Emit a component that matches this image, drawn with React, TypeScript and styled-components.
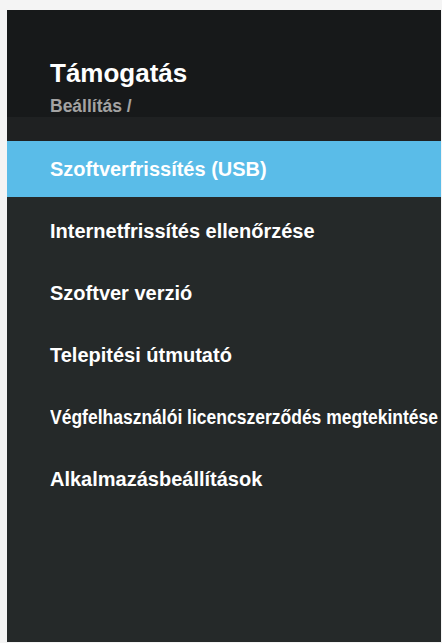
import React from "react";
import styled, { createGlobalStyle } from "styled-components";

const GlobalStyle = createGlobalStyle`
    html, body {
        margin: 0;
        padding: 0;
        background: #ffffff;
    }

    body {
        font-family: "Liberation Sans", Arial, sans-serif;
    }
`;

const Page = styled.div`
    width: 442px;
    height: 643px;
    padding: 10px 1px 1px 7px;
    box-sizing: border-box;
    background: #f4f4f4;
`;

const Panel = styled.div`
    height: 100%;
    display: flex;
    flex-direction: column;
    background: #252929;
    overflow: hidden;
`;

const Header = styled.div`
    display: flex;
    flex-direction: column;
    padding: 48px 0 0 43px;
    height: 107px;
    box-sizing: border-box;
    background: #17191a;
`;

const Title = styled.h1`
    margin: 0;
    font-size: 26px;
    line-height: 30px;
    font-weight: 700;
    color: #ffffff;
`;

const Breadcrumb = styled.div`
    margin-top: 8px;
    font-size: 17.5px;
    line-height: 20px;
    font-weight: 700;
    color: #a3a3a3;
`;

const Band = styled.div`
    height: 24px;
    background: #1f2122;
`;

const Menu = styled.ul`
    list-style: none;
    margin: 0;
    padding: 0;
    display: flex;
    flex-direction: column;
    gap: 6px;
`;

const Item = styled.li<{ $active?: boolean }>`
    height: 56px;
    display: flex;
    align-items: center;
    padding-left: 43px;
    background: ${(p) => (p.$active ? "#5abce8" : "transparent")};
    color: #ffffff;
    font-size: 20px;
    font-weight: 700;
    white-space: nowrap;
`;

const Label = styled.span<{ $squeeze?: number }>`
    display: inline-block;
    transform-origin: left center;
    transform: scaleX(${(p) => p.$squeeze ?? 1});
`;

const items: { label: string; squeeze?: number }[] = [
    { label: "Szoftverfrissítés (USB)" },
    { label: "Internetfrissítés ellenőrzése" },
    { label: "Szoftver verzió" },
    { label: "Telepitési útmutató" },
    { label: "Végfelhasználói licencszerződés megtekintése", squeeze: 0.875 },
    { label: "Alkalmazásbeállítások" },
];

const App = (): JSX.Element => (
    <>
        <GlobalStyle />
        <Page>
            <Panel>
                <Header>
                    <Title>Támogatás</Title>
                    <Breadcrumb>Beállítás /</Breadcrumb>
                </Header>
                <Band />
                <Menu>
                    {items.map((item, i) => (
                        <Item key={item.label} $active={i === 0}>
                            <Label $squeeze={item.squeeze}>{item.label}</Label>
                        </Item>
                    ))}
                </Menu>
            </Panel>
        </Page>
    </>
);

export default App;
